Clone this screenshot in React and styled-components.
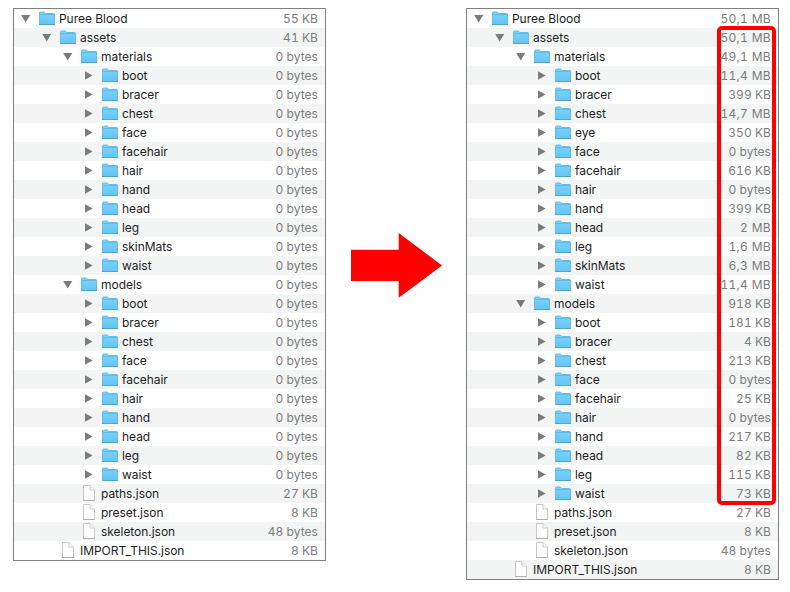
import React from 'react';
import styled, { createGlobalStyle } from 'styled-components';

const GlobalStyle = createGlobalStyle`
  * { box-sizing: border-box; }
  body { margin: 0; background: #fff; font-family: Inter, "Liberation Sans", sans-serif; }
`;

const Page = styled.main`
  display: flex;
  align-items: flex-start;
  width: 790px;
  height: 592px;
  padding: 8px 0 0 13px;
  overflow: hidden;
`;

const Panel = styled.section`
  position: relative;
  flex: none;
  width: 313px;
  border: 1px solid #808080;
`;

const Gap = styled.div`
  flex: none;
  width: 140px;
  padding: 225px 0 0 25px;
  line-height: 0;
`;

const Row = styled.div`
  display: flex;
  align-items: center;
  height: 19px;
  padding-left: ${(p) => 7 + p.$depth * 21}px;
  padding-right: 7px;
  background: #fff;
  &:nth-child(even) { background: #f3f5f5; }
`;

const Toggle = styled.span`
  display: flex;
  width: 18px;
  height: 19px;
`;

const IconSlot = styled.span`
  display: flex;
  width: 20px;
  height: 19px;
`;

const Name = styled.span`
  flex: 1;
  color: #1c1c1c;
  font-size: 12px;
  line-height: 19px;
  letter-spacing: -0.04px;
  white-space: nowrap;
`;

const Size = styled.span`
  color: #7b7c7c;
  font-size: 12px;
  font-variant-numeric: tabular-nums;
  line-height: 19px;
  letter-spacing: ${(p) => (p.$wide ? 0.3 : 0.05)}px;
  white-space: nowrap;
`;

const Highlight = styled.div`
  position: absolute;
  left: 250px;
  top: 17px;
  width: 59px;
  height: 479px;
  border: 4px solid #fe0000;
  border-radius: 5px;
`;

const Triangle = ({ open }) => (
  <svg width="18" height="19">
    <path d={open ? 'M0.2 6H9.2L4.7 13.6Z' : 'M1 5.2V13.8L8.6 9.5Z'} fill="#7b7b7b" />
  </svg>
);

const Folder = () => (
  <svg width="20" height="19">
    <defs>
      <linearGradient id="folderFace" x1="0" y1="0" x2="0" y2="1">
        <stop offset="0" stopColor="#7ad4fd" />
        <stop offset="1" stopColor="#66c4f4" />
      </linearGradient>
    </defs>
    <path d="M0.5 15.5V4Q0.5 3 1.5 3H5Q5.7 3 6.2 3.8L6.8 4.5H14.6Q15.5 4.5 15.5 5.4V15.5Z" fill="url(#folderFace)" stroke="#65bce6" />
    <path d="M0.5 5.5H15.5" stroke="#62bbe7" />
    <path d="M0 15.5H16" stroke="#4da5d1" />
  </svg>
);

const Doc = () => (
  <svg width="20" height="19">
    <path d="M2.5 1.5H9L13.5 6V16.5H2.5Z" fill="#fff" stroke="#c6c6c6" />
    <path d="M9 1.5V6H13.5" fill="#f7f7f7" stroke="#cdcdcd" />
    <path d="M2 16.5H14" stroke="#b0b0b0" />
  </svg>
);

const before = [
  [0, 'Puree Blood', '55 KB', 'open'],
  [1, 'assets', '41 KB', 'open'],
  [2, 'materials', '0 bytes', 'open'],
  ...['boot', 'bracer', 'chest', 'face', 'facehair', 'hair', 'hand', 'head', 'leg', 'skinMats', 'waist']
    .map((n) => [3, n, '0 bytes', 'closed']),
  [2, 'models', '0 bytes', 'open'],
  ...['boot', 'bracer', 'chest', 'face', 'facehair', 'hair', 'hand', 'head', 'leg', 'waist']
    .map((n) => [3, n, '0 bytes', 'closed']),
  [2, 'paths.json', '27 KB', 'file'],
  [2, 'preset.json', '8 KB', 'file'],
  [2, 'skeleton.json', '48 bytes', 'file'],
  [1, 'IMPORT_THIS.json', '8 KB', 'file'],
];

const after = [
  [0, 'Puree Blood', '50,1 MB', 'open'],
  [1, 'assets', '50,1 MB', 'open'],
  [2, 'materials', '49,1 MB', 'open'],
  [3, 'boot', '11,4 MB', 'closed'],
  [3, 'bracer', '399 KB', 'closed'],
  [3, 'chest', '14,7 MB', 'closed'],
  [3, 'eye', '350 KB', 'closed'],
  [3, 'face', '0 bytes', 'closed'],
  [3, 'facehair', '616 KB', 'closed'],
  [3, 'hair', '0 bytes', 'closed'],
  [3, 'hand', '399 KB', 'closed'],
  [3, 'head', '2 MB', 'closed'],
  [3, 'leg', '1,6 MB', 'closed'],
  [3, 'skinMats', '6,3 MB', 'closed'],
  [3, 'waist', '11,4 MB', 'closed'],
  [2, 'models', '918 KB', 'open'],
  [3, 'boot', '181 KB', 'closed'],
  [3, 'bracer', '4 KB', 'closed'],
  [3, 'chest', '213 KB', 'closed'],
  [3, 'face', '0 bytes', 'closed'],
  [3, 'facehair', '25 KB', 'closed'],
  [3, 'hair', '0 bytes', 'closed'],
  [3, 'hand', '217 KB', 'closed'],
  [3, 'head', '82 KB', 'closed'],
  [3, 'leg', '115 KB', 'closed'],
  [3, 'waist', '73 KB', 'closed'],
  [2, 'paths.json', '27 KB', 'file'],
  [2, 'preset.json', '8 KB', 'file'],
  [2, 'skeleton.json', '48 bytes', 'file'],
  [1, 'IMPORT_THIS.json', '8 KB', 'file'],
];

const Tree = ({ rows, children }) => (
  <Panel>
    <div>
      {rows.map(([depth, name, size, kind], i) => (
        <Row key={i} $depth={depth}>
          <Toggle>{kind !== 'file' && <Triangle open={kind === 'open'} />}</Toggle>
          <IconSlot>{kind === 'file' ? <Doc /> : <Folder />}</IconSlot>
          <Name>{name}</Name>
          <Size $wide={size.endsWith('MB')}>{size}</Size>
        </Row>
      ))}
    </div>
    {children}
  </Panel>
);

export default function App() {
  return (
    <>
      <GlobalStyle />
      <Page>
        <Tree rows={before} />
        <Gap>
          <svg width="92" height="66">
            <path d="M0 16.7H47.7V0L91 32.5L47.7 64.7V48H0Z" fill="#fe0000" />
          </svg>
        </Gap>
        <Tree rows={after}>
          <Highlight />
        </Tree>
      </Page>
    </>
  );
}
